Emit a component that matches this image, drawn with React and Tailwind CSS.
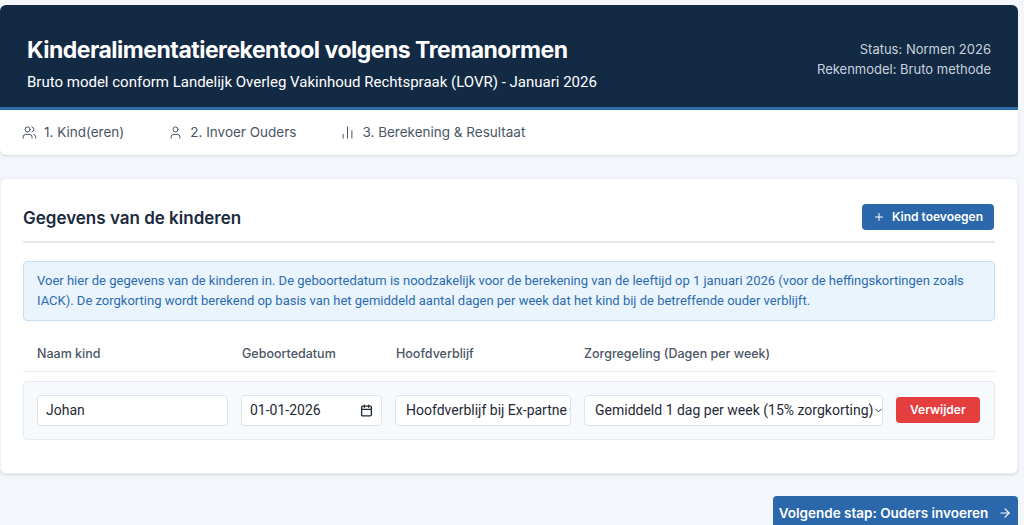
import { Users, User, BarChart2, Plus, ArrowRight, Calendar, ChevronDown } from "lucide-react";

const head = { fontFamily: "Inter, 'Noto Sans', sans-serif" };
const body = { fontFamily: "Roboto, 'Liberation Sans', sans-serif" };

export default function App() {
  return (
    <div className="min-h-[525px] bg-[#f3f6fa] pt-[5px]" style={head}>
      <div className="w-[1018px]">
        <header className="flex justify-between rounded-t-md bg-[#132a45] border-b-[3px] border-[#2f6bb0] h-[105px] pl-[27px] pr-[27px] pt-[31px]">
          <div>
            <h1 className="text-[23px] font-bold text-white tracking-[-0.5px] leading-[28px]">Kinderalimentatierekentool volgens Tremanormen</h1>
            <p className="mt-[7px] text-[15px] text-white" style={body}>Bruto model conform Landelijk Overleg Vakinhoud Rechtspraak (LOVR) - Januari 2026</p>
          </div>
          <div className="text-right text-[13px] text-[#c9d3df] leading-[20px] pt-[3px]">
            <div>Status: Normen 2026</div>
            <div>Rekenmodel: Bruto methode</div>
          </div>
        </header>
        <nav className="flex items-center h-[45px] bg-white rounded-b-md shadow-sm pl-[22px] gap-[44px] text-[13.5px] text-[#4a5565]">
          <span className="flex items-center gap-[7px]"><Users size={15} strokeWidth={1.6} />1. Kind(eren)</span>
          <span className="flex items-center gap-[7px]"><User size={15} strokeWidth={1.6} />2. Invoer Ouders</span>
          <span className="flex items-center gap-[7px]"><BarChart2 size={15} strokeWidth={1.6} />3. Berekening &amp; Resultaat</span>
        </nav>

        <section className="mt-[23px] bg-white rounded-md shadow-sm border border-[#eef1f5] px-[22px] pt-[23px] pb-[33px]">
          <div className="flex items-center justify-between pb-[9px] border-b-2 border-[#e5e9ee]">
            <h2 className="text-[17px] font-semibold text-[#1b2a3d] pt-[4px]">Gegevens van de kinderen</h2>
            <button className="flex items-center gap-[7px] h-[26px] px-[11px] mr-[1px] bg-[#2a68ab] text-white text-[12px] font-semibold rounded"><Plus size={12} />Kind toevoegen</button>
          </div>
          <div className="mt-[18px] bg-[#eaf4fd] border border-[#c4def5] rounded px-[13px] py-[9px] text-[13px] leading-[20px] text-[#2b6cb0]" style={body}>
            Voer hier de gegevens van de kinderen in. De geboortedatum is noodzakelijk voor de berekening van de leeftijd op 1 januari 2026 (voor de heffingskortingen zoals IACK). De zorgkorting wordt berekend op basis van het gemiddeld aantal dagen per week dat het kind bij de betreffende ouder verblijft.
          </div>
          <div className="mt-[18px] flex h-[33px] items-center border-b border-[#e5e9ee] text-[12.5px] font-medium text-[#4a5565] pl-[14px]">
            <span className="w-[205px]">Naam kind</span>
            <span className="w-[154px]">Geboortedatum</span>
            <span className="w-[188px]">Hoofdverblijf</span>
            <span>Zorgregeling (Dagen per week)</span>
          </div>
          <div className="mt-[9px] flex items-center gap-[13px] h-[59px] bg-[#f7fafd] border border-[#e6ebf1] rounded px-[13px] text-[14px] text-[#1f2937]" style={body}>
            <div className="w-[191px] h-[31px] bg-white border border-[#dde3ea] rounded flex items-center px-[8px]">Johan</div>
            <div className="w-[141px] h-[31px] bg-white border border-[#dde3ea] rounded flex items-center justify-between px-[8px]">01-01-2026<Calendar size={13} strokeWidth={2.4} /></div>
            <div className="w-[176px] h-[31px] bg-white border border-[#dde3ea] rounded flex items-center justify-between px-[10px] overflow-hidden whitespace-nowrap">Hoofdverblijf bij Ex-partne<ChevronDown size={11} className="shrink-0" /></div>
            <div className="w-[299px] h-[31px] bg-white border border-[#dde3ea] rounded flex items-center justify-between px-[10px] whitespace-nowrap">Gemiddeld 1 dag per week (15% zorgkorting)<ChevronDown size={11} className="shrink-0" /></div>
            <button className="h-[26px] px-[14px] bg-[#e53e3e] text-white text-[12px] font-semibold rounded" style={head}>Verwijder</button>
          </div>
        </section>

        <div className="flex justify-end mt-[22px]">
          <button className="flex items-center gap-[10px] h-[35px] w-[245px] justify-center bg-[#2a68ab] text-white text-[13.5px] font-semibold rounded">Volgende stap: Ouders invoeren<ArrowRight size={14} /></button>
        </div>
      </div>
    </div>
  );
}
